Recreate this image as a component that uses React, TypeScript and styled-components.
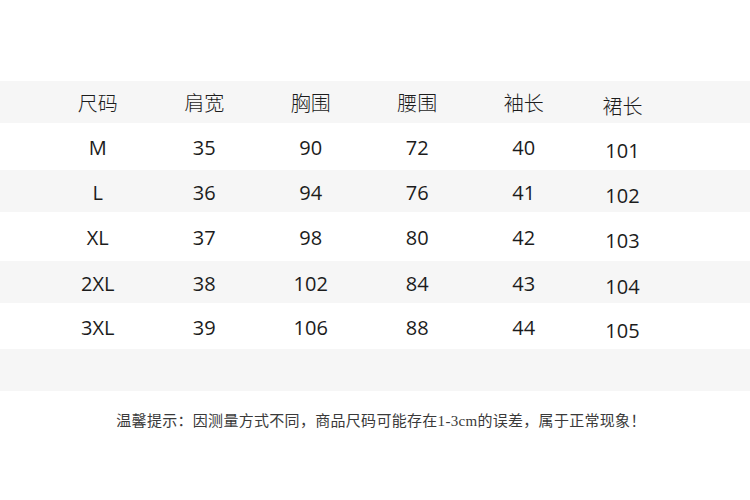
import React from "react";
import styled, { createGlobalStyle } from "styled-components";

const GlobalStyle = createGlobalStyle`
  html, body {
    margin: 0;
    padding: 0;
    background: #ffffff;
  }
`;

const Page = styled.div`
  width: 750px;
  height: 500px;
  padding-top: 81px;
  box-sizing: border-box;
  font-family: "Open Sans", "Noto Sans CJK SC", sans-serif;
  color: #1c1c1c;
`;

const Table = styled.div`
  display: flex;
  flex-direction: column;
`;

const Row = styled.div<{ $shaded: boolean; $height: number }>`
  display: grid;
  grid-template-columns: repeat(5, 106.5px) 91px;
  align-items: center;
  height: ${(p) => p.$height}px;
  padding-left: 44.5px;
  background: ${(p) => (p.$shaded ? "#f6f6f6" : "#ffffff")};
`;

const Cell = styled.div<{ $drop?: boolean; $head?: boolean }>`
  text-align: center;
  font-size: 20px;
  line-height: 24px;
  font-weight: ${(p) => (p.$head ? 300 : 400)};
  padding-top: ${(p) => (p.$drop ? 9 : 3)}px;
`;

const Note = styled.p`
  margin: 18px 0 0;
  padding-left: 12px;
  text-align: center;
  font-family: "Liberation Serif", "Noto Sans CJK SC", serif;
  font-size: 15px;
  color: #3a3a3a;
  letter-spacing: 0.3px;
`;

const headers = ["尺码", "肩宽", "胸围", "腰围", "袖长", "裙长"];

const sizes = [
  ["M", "35", "90", "72", "40", "101"],
  ["L", "36", "94", "76", "41", "102"],
  ["XL", "37", "98", "80", "42", "103"],
  ["2XL", "38", "102", "84", "43", "104"],
  ["3XL", "39", "106", "88", "44", "105"],
];

// measured band heights of the rows below the header
const heights = [47, 42, 49, 42, 46];

const App: React.FC = () => {
  return (
    <>
      <GlobalStyle />
      <Page>
        <Table>
          <Row $shaded $height={42}>
            {headers.map((h, i) => (
              <Cell key={h} $head $drop={i === 5}>
                {h}
              </Cell>
            ))}
          </Row>
          {sizes.map((row, r) => (
            <Row key={row[0]} $shaded={r % 2 === 1} $height={heights[r]}>
              {row.map((v, i) => (
                <Cell key={i} $drop={i === 5}>
                  {v}
                </Cell>
              ))}
            </Row>
          ))}
          <Row $shaded $height={42} />
        </Table>
        <Note>温馨提示：因测量方式不同，商品尺码可能存在1-3cm的误差，属于正常现象！</Note>
      </Page>
    </>
  );
};

export default App;
